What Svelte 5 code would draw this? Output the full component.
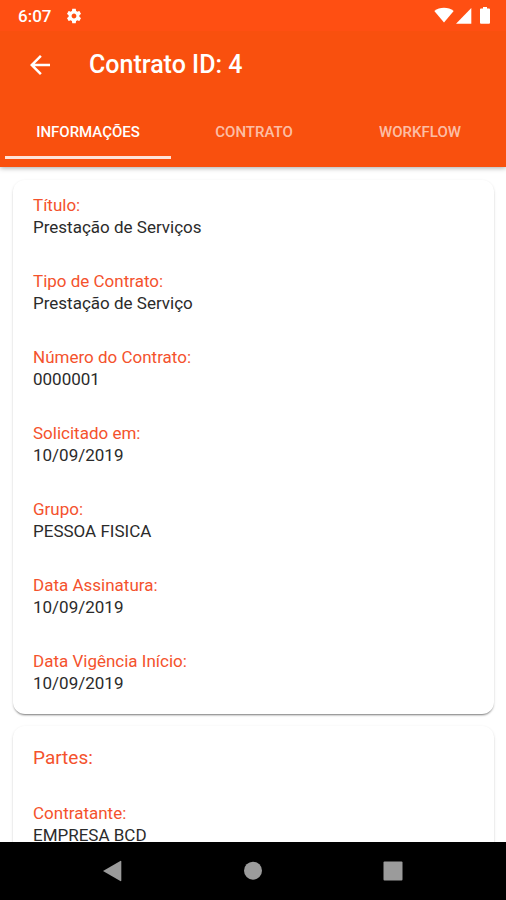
<script>
  /**
   * Contract detail screen: app bar with tabs and a scrollable
   * list of cards with the contract's data.
   */

  const tabs = ['INFORMAÇÕES', 'CONTRATO', 'WORKFLOW'];

  const contract = {
    id: 4,
    info: [
      { label: 'Título', value: 'Prestação de Serviços' },
      { label: 'Tipo de Contrato', value: 'Prestação de Serviço' },
      { label: 'Número do Contrato', value: '0000001' },
      { label: 'Solicitado em', value: '10/09/2019' },
      { label: 'Grupo', value: 'PESSOA FISICA' },
      { label: 'Data Assinatura', value: '10/09/2019' },
      { label: 'Data Vigência Início', value: '10/09/2019' }
    ],
    parties: [{ label: 'Contratante', value: 'EMPRESA BCD' }]
  };

  let activeTab = $state(0);
</script>

{#snippet fields(items)}
  <dl class="fields">
    {#each items as item}
      <div class="field">
        <dt>{item.label}:</dt>
        <dd>{item.value}</dd>
      </div>
    {/each}
  </dl>
{/snippet}

<div class="screen">
  <header class="header">
    <div class="status-bar">
      <span class="clock">6:07</span>
      <svg class="gear" viewBox="0 0 24 24" aria-hidden="true">
        <path
          d="M19.14 12.94c.04-.3.06-.61.06-.94 0-.32-.02-.64-.07-.94l2.03-1.58c.18-.14.23-.41.12-.61l-1.92-3.32c-.12-.22-.37-.29-.59-.22l-2.39.96c-.5-.38-1.03-.7-1.62-.94l-.36-2.54c-.04-.24-.24-.41-.48-.41h-3.84c-.24 0-.43.17-.47.41l-.36 2.54c-.59.24-1.13.57-1.62.94l-2.39-.96c-.22-.08-.47 0-.59.22L2.74 8.87c-.12.21-.08.47.12.61l2.03 1.58c-.05.3-.09.63-.09.94s.02.64.07.94l-2.03 1.58c-.18.14-.23.41-.12.61l1.92 3.32c.12.22.37.29.59.22l2.39-.96c.5.38 1.03.7 1.62.94l.36 2.54c.05.24.24.41.48.41h3.84c.24 0 .44-.17.47-.41l.36-2.54c.59-.24 1.13-.56 1.62-.94l2.39.96c.22.08.47 0 .59-.22l1.92-3.32c.12-.22.07-.47-.12-.61l-2.01-1.58zM12 15.2c-1.76 0-3.2-1.44-3.2-3.2s1.44-3.2 3.2-3.2 3.2 1.44 3.2 3.2-1.44 3.2-3.2 3.2z"
        />
      </svg>
      <div class="indicators">
        <svg width="20" height="18" viewBox="0 0 20 18" aria-hidden="true">
          <path d="M10 15.500 0.300 4C3 1.800 6.400 0.700 10 0.700s7 1.100 9.700 3.300z" />
        </svg>
        <svg width="16" height="18" viewBox="0 0 16 18" aria-hidden="true">
          <path d="M0 16.700 15.300 1v15.700z" />
        </svg>
        <svg class="battery" width="10" height="18" viewBox="0 0 10 18" aria-hidden="true">
          <path d="M3 0h4v1.500h2a1 1 0 0 1 1 1v13.200a1 1 0 0 1-1 1H1a1 1 0 0 1-1-1V2.500a1 1 0 0 1 1-1h2z" />
        </svg>
      </div>
    </div>

    <div class="app-bar">
      <button class="back" aria-label="Voltar">
        <svg width="30" height="30" viewBox="0 0 24 24" aria-hidden="true">
          <path d="M20 11H7.830l5.590-5.590L12 4l-8 8 8 8 1.410-1.410L7.830 13H20v-2z" />
        </svg>
      </button>
      <h1>Contrato ID: {contract.id}</h1>
    </div>

    <div class="tabs" role="tablist">
      {#each tabs as tab, i}
        <button
          class="tab"
          class:active={activeTab === i}
          role="tab"
          aria-selected={activeTab === i}
          onclick={() => (activeTab = i)}
        >
          {tab}
        </button>
      {/each}
    </div>
  </header>

  <main class="content">
    <section class="card">
      {@render fields(contract.info)}
    </section>
    <section class="card">
      <h2>Partes:</h2>
      {@render fields(contract.parties)}
    </section>
  </main>

  <nav class="system-nav">
    <button aria-label="Voltar ao anterior">
      <svg width="20" height="22" viewBox="0 0 20 22" aria-hidden="true">
        <path d="M0 11 17.300 1a0.700 0.700 0 0 1 1 0.600v18.800a0.700 0.700 0 0 1-1 0.600z" />
      </svg>
    </button>
    <button aria-label="Início">
      <svg width="20" height="20" viewBox="0 0 20 20" aria-hidden="true">
        <circle cx="10" cy="9.700" r="9" />
      </svg>
    </button>
    <button aria-label="Recentes">
      <svg width="20" height="20" viewBox="0 0 20 20" aria-hidden="true">
        <rect x="0.500" y="0.500" width="19" height="19" rx="1" />
      </svg>
    </button>
  </nav>
</div>

<style>
  :global(body) {
    margin: 0;
    background: #fff;
    font-family: Roboto, 'Liberation Sans', sans-serif;
  }

  button {
    padding: 0;
    border: none;
    background: none;
    color: inherit;
    font: inherit;
    cursor: pointer;
  }

  svg {
    display: block;
    fill: currentColor;
  }

  h1,
  h2,
  dl,
  dd {
    margin: 0;
  }

  .screen {
    display: flex;
    flex-direction: column;
    height: 100vh;
  }

  .header {
    position: relative;
    flex: none;
    background: #f9500e;
    color: #fff;
    box-shadow: 0 1px 5px rgba(0, 0, 0, 0.35);
  }

  .status-bar {
    display: flex;
    align-items: center;
    height: 31px;
    padding: 0 16px 0 18px;
    background: #ff4f12;
  }

  .clock {
    font-size: 17px;
    font-weight: 500;
  }

  .gear {
    width: 18px;
    height: 18px;
    margin-left: 14px;
  }

  .indicators {
    display: flex;
    gap: 2px;
    margin-left: auto;
  }

  .battery {
    margin-left: 6px;
  }

  .app-bar {
    display: flex;
    align-items: center;
    gap: 34px;
    height: 68px;
    padding: 0 25px;
  }

  h1 {
    font-size: 25px;
    font-weight: 500;
    line-height: 28px;
  }

  .tabs {
    display: grid;
    grid-template-columns: repeat(3, 1fr);
    height: 60px;
    padding: 0 3px 8px 5px;
  }

  .tab {
    padding-top: 8px;
    border-bottom: 3px solid transparent;
    color: rgba(255, 255, 255, 0.65);
    font-size: 15px;
    font-weight: 500;
  }

  .tab.active {
    border-bottom-color: #ffe2d8;
    color: #fff;
  }

  .content {
    flex: 1;
    min-height: 0;
    padding: 13px 12px 0 13px;
    overflow-y: auto;
    scrollbar-width: none;
  }

  .card {
    margin-bottom: 12px;
    padding: 14px 20px 20px;
    border-radius: 12px;
    background: #fff;
    box-shadow:
      0 2px 2px -1px rgba(0, 0, 0, 0.45),
      0 1px 3px rgba(0, 0, 0, 0.12);
  }

  h2 {
    margin: 6px 0 32px;
    color: #f4522d;
    font-size: 19px;
    font-weight: 400;
    line-height: 24px;
  }

  .fields {
    display: grid;
    gap: 32px;
    font-size: 17px;
    line-height: 22px;
  }

  dt {
    color: #f4522d;
  }

  dd {
    color: #2b2b2b;
  }

  .system-nav {
    display: flex;
    flex: none;
    justify-content: center;
    gap: 100px;
    height: 58px;
    background: #000;
    color: #9b9b9b;
  }

  .system-nav button {
    display: flex;
    align-items: center;
    justify-content: center;
    width: 40px;
  }
</style>
